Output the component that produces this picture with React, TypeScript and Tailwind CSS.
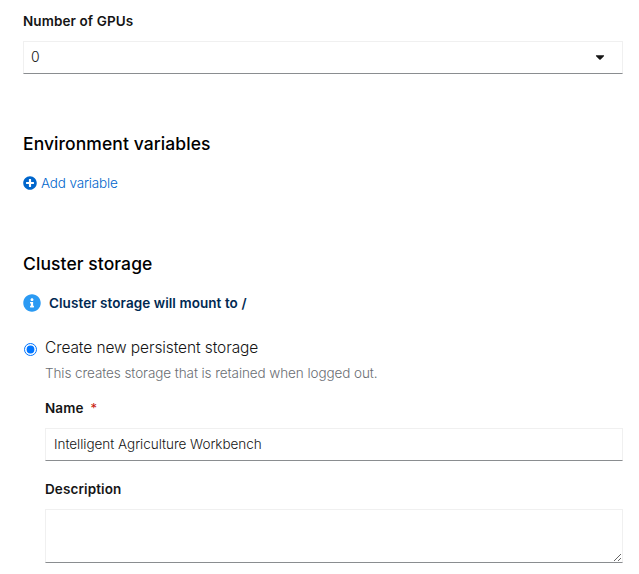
import { useState } from "react";
import type { ReactNode } from "react";
import { FaCaretDown, FaInfoCircle, FaPlusCircle } from "react-icons/fa";

const control =
  "block w-full rounded-none border border-[#f0f0f0] border-b-[#8a8d90] bg-white px-2 text-[13.5px] font-[350] tracking-[-0.03px] text-[#151515] outline-none";

function Label({ children, required }: { children: ReactNode; required?: boolean }) {
  return (
    <div className="flex h-[21px] items-center text-[13.5px] font-semibold leading-[21px] tracking-[0.1px] text-[#151515]">
      <span>{children}</span>
      {required && <span className="ml-[7px] text-[13px] font-normal text-[#c9190b]">*</span>}
    </div>
  );
}

function Heading({ children }: { children: ReactNode }) {
  return <h2 className="h-[26px] text-[17.5px] font-medium leading-[26px] tracking-[0.08px] text-black">{children}</h2>;
}

export default function App() {
  const [name, setName] = useState("Intelligent Agriculture Workbench");

  return (
    <main className="flex h-[574px] w-[639px] flex-col overflow-hidden bg-white pl-[23px] pr-4 pt-[11px] font-['Inter','Liberation_Sans',sans-serif]">
      <Label>Number of GPUs</Label>
      <button type="button" className="mt-[9px] flex h-[33px] w-full items-center justify-between border border-[#f0f0f0] border-b-[#8a8d90] bg-white pb-[2px] pl-[7px] pr-[15px] text-[14px] font-[350] leading-[21px] text-[#151515]">
        <span>0</span>
        <FaCaretDown className="size-[14px]" />
      </button>

      <section className="mt-[57px]">
        <Heading>Environment variables</Heading>
        <button type="button" className="mt-[15px] flex h-[22px] items-center gap-1 text-[13.5px] tracking-[-0.15px] text-[#06c]">
          <FaPlusCircle className="size-[14px]" />
          <span className="pt-px font-[350]">Add variable</span>
        </button>
      </section>

      <section className="mt-[57px]">
        <Heading>Cluster storage</Heading>
        <div className="mt-[15px] flex h-[22px] items-center gap-2 text-[13.5px] font-semibold tracking-[0.07px] text-[#002952]">
          <FaInfoCircle className="size-[18px] text-[#2b9af3]" />
          <span>Cluster storage will mount to /</span>
        </div>

        <label className="mt-[22px] flex h-6 items-center text-[15.5px] font-[350] leading-6 tracking-[-0.1px] text-[#151515]">
          <input type="radio" name="storage" defaultChecked className="ml-[1px] mr-2 mt-[2px] size-[13px]" />
          <span>Create new persistent storage</span>
        </label>
        <div className="pl-[22px]">
          <p className="mt-[3px] h-[21px] text-[13.5px] font-[350] leading-[21px] tracking-[-0.08px] text-[#6a6e73]">
            This creates storage that is retained when logged out.
          </p>
          <div className="mt-[14px]">
            <Label required>Name</Label>
            <input
              aria-label="Name"
              value={name}
              onChange={(e) => setName(e.target.value)}
              className={`${control} mt-[9px] h-[33px] pb-[2px]`}
            />
          </div>
          <div className="mt-[18px]">
            <Label>Description</Label>
            <textarea aria-label="Description" className={`${control} mt-[9px] h-[54px] resize`} />
          </div>
        </div>
      </section>
    </main>
  );
}
